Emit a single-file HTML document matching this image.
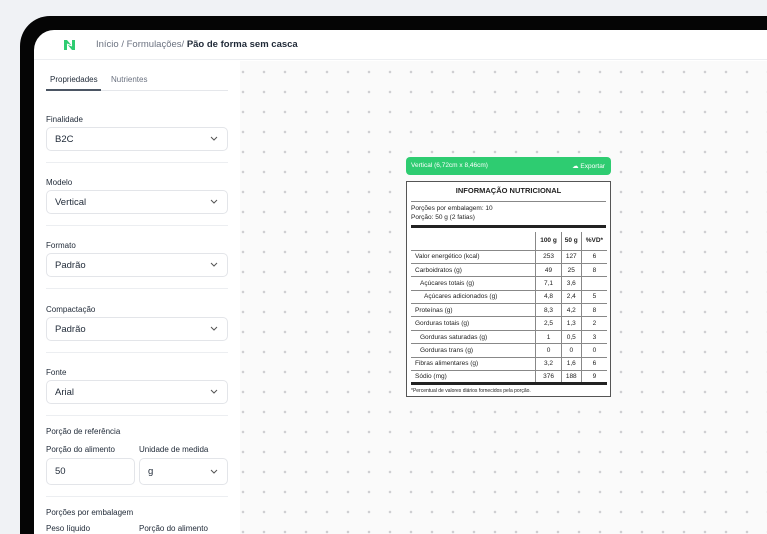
<!DOCTYPE html>
<html><head><meta charset="utf-8"><style>
*{box-sizing:border-box;margin:0;padding:0}
html,body{width:767px;height:534px;overflow:hidden}
body{background:#f0f2f5;font-family:"Liberation Sans",sans-serif;position:relative;color:#1f2937}
.wrap{position:absolute;left:0;top:0;width:767px;height:534px;overflow:hidden}
.frame{position:absolute;left:20px;top:16px;width:747px;height:518px;background:#050505;border-radius:30px 0 0 0}
.screen{position:absolute;left:34px;top:30px;width:733px;height:504px;background:#fff;border-radius:20px 0 0 0;overflow:hidden}
.hdr{height:30px;border-bottom:1px solid #eceef1;position:relative}
.crumb{position:absolute;left:62px;top:9px;font-size:9.5px;color:#6b7280}
.crumb b{color:#1f2937;font-weight:bold}
.side{position:absolute;left:0;top:31px;width:206px;bottom:0;background:#fff;overflow:hidden}
.canvas{position:absolute;left:206px;top:31px;right:0;bottom:0;background-color:#fafafa;background-image:radial-gradient(circle,#cfcfd2 1.1px,transparent 1.5px);background-size:21px 20px;background-position:-7.5px 1px}
.tabs{position:absolute;left:12px;top:13px;width:182px;height:17px;border-bottom:1px solid #e5e7eb;font-size:8px}
.tabs span{position:absolute;top:1px}
.ul{position:absolute;left:0;top:15px;width:55px;height:2px;background:#4b5563}
.lbl{position:absolute;left:12px;font-size:8px;color:#1f2937}
.sel{position:absolute;left:12px;width:182px;height:24px;border:1px solid #e3e5e9;border-radius:5px;font-size:9.5px;padding:6px 0 0 8px;color:#1f2937}
.sel svg{position:absolute;right:9px;top:8px}
.sep{position:absolute;left:12px;width:182px;height:1px;background:#eceef1}
.tbl{position:absolute;left:406px;top:181px;width:205px;height:216px;border:1px solid #555;background:#fff;font-size:6.5px;color:#222}
.gbar{position:absolute;left:406px;top:157px;width:205px;height:18px;background:#2ecc71;border-radius:4px;color:#fff;font-size:6.5px}
table{border-collapse:collapse;position:absolute;left:4px;top:50px;width:196px}
td{height:13.4px;border-bottom:1px solid #888;text-align:center}
td:first-child{text-align:left;padding-left:4px}
td.n{border-left:1px solid #888}
</style></head><body><div class="wrap">
<div class="frame"></div>
<div class="screen">
 <div class="hdr">
  <svg style="position:absolute;left:29px;top:9px" width="13" height="12" viewBox="0 0 13 12"><path d="M1 1h3l5 6V1h3v10H9L4 5v6H1z" fill="#2ecc71"/><path d="M4 5l5 2" stroke="#fff" stroke-width="1.2"/></svg>
  <div class="crumb">Início / Formulações/ <b>Pão de forma sem casca</b></div>
 </div>
 <div class="side">
  <div class="tabs"><span style="left:4px">Propriedades</span><span style="left:65px;color:#6b7280">Nutrientes</span><div class="ul"></div></div>
  <div class="lbl" style="top:54px">Finalidade</div>
  <div class="sel" style="top:66px">B2C<svg width="8" height="5"><path d="M1 1l3 3 3-3" stroke="#555" fill="none"/></svg></div>
  <div class="sep" style="top:101px"></div>
  <div class="lbl" style="top:117px">Modelo</div>
  <div class="sel" style="top:129px">Vertical<svg width="8" height="5"><path d="M1 1l3 3 3-3" stroke="#555" fill="none"/></svg></div>
  <div class="sep" style="top:164px"></div>
  <div class="lbl" style="top:180px">Formato</div>
  <div class="sel" style="top:192px">Padrão<svg width="8" height="5"><path d="M1 1l3 3 3-3" stroke="#555" fill="none"/></svg></div>
  <div class="sep" style="top:227px"></div>
  <div class="lbl" style="top:244px">Compactação</div>
  <div class="sel" style="top:256px">Padrão<svg width="8" height="5"><path d="M1 1l3 3 3-3" stroke="#555" fill="none"/></svg></div>
  <div class="sep" style="top:291px"></div>
  <div class="lbl" style="top:307px">Fonte</div>
  <div class="sel" style="top:319px">Arial<svg width="8" height="5"><path d="M1 1l3 3 3-3" stroke="#555" fill="none"/></svg></div>
  <div class="sep" style="top:354px"></div>
  <div class="lbl" style="top:366px">Porção de referência</div>
  <div class="lbl" style="top:384px">Porção do alimento</div>
  <div class="lbl" style="top:384px;left:105px">Unidade de medida</div>
  <div class="sel" style="top:397px;width:89px;height:27px;padding-top:7px">50</div>
  <div class="sel" style="top:397px;left:105px;width:89px;height:27px;padding-top:7px">g<svg width="8" height="5" style="top:10px"><path d="M1 1l3 3 3-3" stroke="#555" fill="none"/></svg></div>
  <div class="sep" style="top:435px"></div>
  <div class="lbl" style="top:447px">Porções por embalagem</div>
  <div class="lbl" style="top:463px">Peso líquido</div>
  <div class="lbl" style="top:463px;left:105px">Porção do alimento</div>
 </div>
 <div class="canvas"></div>
</div>
<div class="gbar"><span style="position:absolute;left:5px;top:5px">Vertical (6,72cm x 8,46cm)</span><span style="position:absolute;right:6px;top:5px">☁ Exportar</span></div>
<div class="tbl">
 <div style="position:absolute;left:4px;right:4px;top:4px;height:16px;border-bottom:1px solid #888;text-align:center;font-weight:bold;font-size:7.5px">INFORMAÇÃO NUTRICIONAL</div>
 <div style="position:absolute;left:4px;top:23px">Porções por embalagem: 10</div>
 <div style="position:absolute;left:4px;top:32px">Porção: 50 g (2 fatias)</div>
 <div style="position:absolute;left:4px;right:4px;top:43px;height:3px;background:#222"></div>
 <table>
  <tr><td></td><td class="n" style="height:18px;font-weight:bold">100 g</td><td class="n" style="font-weight:bold">50 g</td><td class="n" style="font-weight:bold">%VD*</td></tr>
  <tr><td>Valor energético (kcal)</td><td class="n">253</td><td class="n">127</td><td class="n">6</td></tr>
  <tr><td>Carboidratos (g)</td><td class="n">49</td><td class="n">25</td><td class="n">8</td></tr>
  <tr><td style="padding-left:9px">Açúcares totais (g)</td><td class="n">7,1</td><td class="n">3,6</td><td class="n"></td></tr>
  <tr><td style="padding-left:13px">Açúcares adicionados (g)</td><td class="n">4,8</td><td class="n">2,4</td><td class="n">5</td></tr>
  <tr><td>Proteínas (g)</td><td class="n">8,3</td><td class="n">4,2</td><td class="n">8</td></tr>
  <tr><td>Gorduras totais (g)</td><td class="n">2,5</td><td class="n">1,3</td><td class="n">2</td></tr>
  <tr><td style="padding-left:9px">Gorduras saturadas (g)</td><td class="n">1</td><td class="n">0,5</td><td class="n">3</td></tr>
  <tr><td style="padding-left:9px">Gorduras trans (g)</td><td class="n">0</td><td class="n">0</td><td class="n">0</td></tr>
  <tr><td>Fibras alimentares (g)</td><td class="n">3,2</td><td class="n">1,6</td><td class="n">6</td></tr>
  <tr><td style="border-bottom:3px solid #222">Sódio (mg)</td><td class="n" style="border-bottom:3px solid #222">376</td><td class="n" style="border-bottom:3px solid #222">188</td><td class="n" style="border-bottom:3px solid #222">9</td></tr>
 </table>
 <div style="position:absolute;left:4px;top:206px;font-size:5px">*Percentual de valores diários fornecidos pela porção.</div>
</div>
</div></body></html>
